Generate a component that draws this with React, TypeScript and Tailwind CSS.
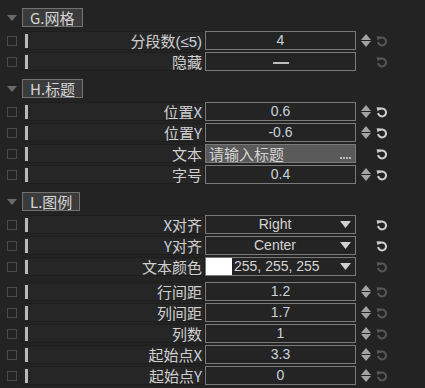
import React from 'react';

type Row = {
  label: React.ReactNode;
  kind: 'num' | 'text' | 'select' | 'color' | 'toggle';
  value?: string;
  stepper?: boolean;
  bright?: boolean;
  extra?: string;
};

type Section = { title: string; rows: Row[] };

const XY = ({ c }: { c: string }) => <span className="text-[#c4d2e0]">{c}</span>;

const sections: Section[] = [
  {
    title: 'G.网格',
    rows: [
      {
        label: <>分段数<span className="font-['Liberation_Sans',Arial,sans-serif] text-[#c8d2dc]">(≤5)</span></>,
        kind: 'num',
        value: '4',
        stepper: true,
      },
      { label: '隐藏', kind: 'toggle' },
    ],
  },
  {
    title: 'H.标题',
    rows: [
      { label: <>位置<XY c="X" /></>, kind: 'num', value: '0.6', stepper: true, bright: true },
      { label: <>位置<XY c="Y" /></>, kind: 'num', value: '-0.6', stepper: true, bright: true },
      { label: '文本', kind: 'text', value: '请输入标题', bright: true },
      { label: '字号', kind: 'num', value: '0.4', stepper: true, bright: true },
    ],
  },
  {
    title: 'L.图例',
    rows: [
      { label: <><XY c="X" />对齐</>, kind: 'select', value: 'Right', bright: true },
      { label: <><XY c="Y" />对齐</>, kind: 'select', value: 'Center', bright: true },
      { label: '文本颜色', kind: 'color', value: '255, 255, 255', extra: 'mb-[4px]' },
      { label: '行间距', kind: 'num', value: '1.2', stepper: true },
      { label: '列间距', kind: 'num', value: '1.7', stepper: true },
      { label: '列数', kind: 'num', value: '1', stepper: true },
      { label: <>起始点<XY c="X" /></>, kind: 'num', value: '3.3', stepper: true },
      { label: <>起始点<XY c="Y" /></>, kind: 'num', value: '0', stepper: true },
    ],
  },
];

const Stepper = () => (
  <svg width="10" height="13" viewBox="0 0 10 13">
    <polygon points="5,0 10,6 0,6" fill="#a3a3a3" />
    <polygon points="0,7 10,7 5,13" fill="#a3a3a3" />
  </svg>
);

const Reset = ({ bright }: { bright?: boolean }) => (
  <svg width="12" height="12" viewBox="0 0 12 12">
    <path
      d="M3.2 3.6 A4 4 0 1 1 2.1 7"
      fill="none"
      stroke={bright ? '#cfcfcf' : '#575757'}
      strokeWidth="2"
    />
    <polygon points="0.6,1.2 5.4,1.6 1.6,5.6" fill={bright ? '#cfcfcf' : '#575757'} />
  </svg>
);

const Arrow = () => (
  <svg width="11" height="7" viewBox="0 0 11 7">
    <polygon points="0,0 11,0 5.5,7" fill="#d0d0d0" />
  </svg>
);

const Field: React.FC<{ row: Row }> = ({ row }) => {
  const base = 'w-[151px] h-[19px] border border-[#7a7a7a] flex items-center';
  if (row.kind === 'num') {
    return (
      <div className={`${base} bg-[#242424] justify-center text-[14px] text-[#c9d3dd]`}>
        {row.value}
      </div>
    );
  }
  if (row.kind === 'toggle') {
    return (
      <div className={`${base} bg-[#242424] justify-center`}>
        <div className="w-[16px] h-[2px] bg-[#bdbdbd] mt-[2px]" />
      </div>
    );
  }
  if (row.kind === 'text') {
    return (
      <div className={`${base} bg-[#5a5a5a] pl-[3px] pr-[4px] justify-between text-[15px] text-[#d4d4d4]`}>
        <span className="font-['Noto_Sans_CJK_SC',sans-serif] leading-none">{row.value}</span>
        <span className="flex gap-[1px] self-end mb-[3px]">
          <span className="w-[2px] h-[2px] bg-[#bdbdbd]" />
          <span className="w-[2px] h-[2px] bg-[#bdbdbd]" />
          <span className="w-[2px] h-[2px] bg-[#bdbdbd]" />
          <span className="w-[2px] h-[2px] bg-[#bdbdbd]" />
        </span>
      </div>
    );
  }
  if (row.kind === 'select') {
    return (
      <div className={`${base} bg-[#242424] text-[14px] text-[#d4d4d4] pr-[4px]`}>
        <span className="flex-1 text-center pl-[4px]">{row.value}</span>
        <Arrow />
      </div>
    );
  }
  return (
    <div className={`${base} bg-[#242424] text-[14px] text-[#d4d4d4] pr-[4px]`}>
      <div className="w-[26px] h-full bg-white" />
      <span className="flex-1 pl-[2px]">{row.value}</span>
      <Arrow />
    </div>
  );
};

const RowView: React.FC<{ row: Row }> = ({ row }) => (
  <div className={`flex items-center h-[19px] ${row.extra ?? ''}`}>
    <div className="w-[22px] flex pl-[7px]">
      <div className="w-[10px] h-[10px] border border-[#4a4a4a]" />
    </div>
    <div className="w-[183px] h-[19px] bg-[#262626] border border-[#1d1d1d] flex items-center">
      <div className="w-[3px] h-[14px] bg-[#b8b8b8] ml-[2px]" />
      <span className="flex-1 text-right pr-[2px] text-[15px] text-[#d0d0d0] font-['Noto_Sans_CJK_SC',sans-serif] leading-none">
        {row.label}
      </span>
    </div>
    <Field row={row} />
    <div className="w-[10px] ml-[5px] flex">{row.stepper && <Stepper />}</div>
    <div className="ml-[5px] flex">
      <Reset bright={row.bright} />
    </div>
  </div>
);

export default function App() {
  return (
    <div className="w-[425px] h-[388px] bg-[#232323] pt-[8px] font-['Liberation_Sans',Arial,sans-serif] flex flex-col gap-[8px]">
      {sections.map(s => (
        <div key={s.title} className="flex flex-col gap-[2px]">
          <div className="flex items-center h-[19px] mb-[2px]">
            <div className="w-[22px] flex pl-[7px]">
              <svg width="10" height="6" viewBox="0 0 10 6">
                <polygon points="0,0 10,0 5,6" fill="#6a6a6a" />
              </svg>
            </div>
            <div className="h-[19px] px-[7px] bg-[#3b3b3b] border border-[#727272] flex items-center text-[15px] text-[#d6d6d6] font-['Noto_Sans_CJK_SC',sans-serif] leading-none">
              {s.title}
            </div>
          </div>
          {s.rows.map((r, i) => (
            <RowView key={i} row={r} />
          ))}
        </div>
      ))}
    </div>
  );
}
